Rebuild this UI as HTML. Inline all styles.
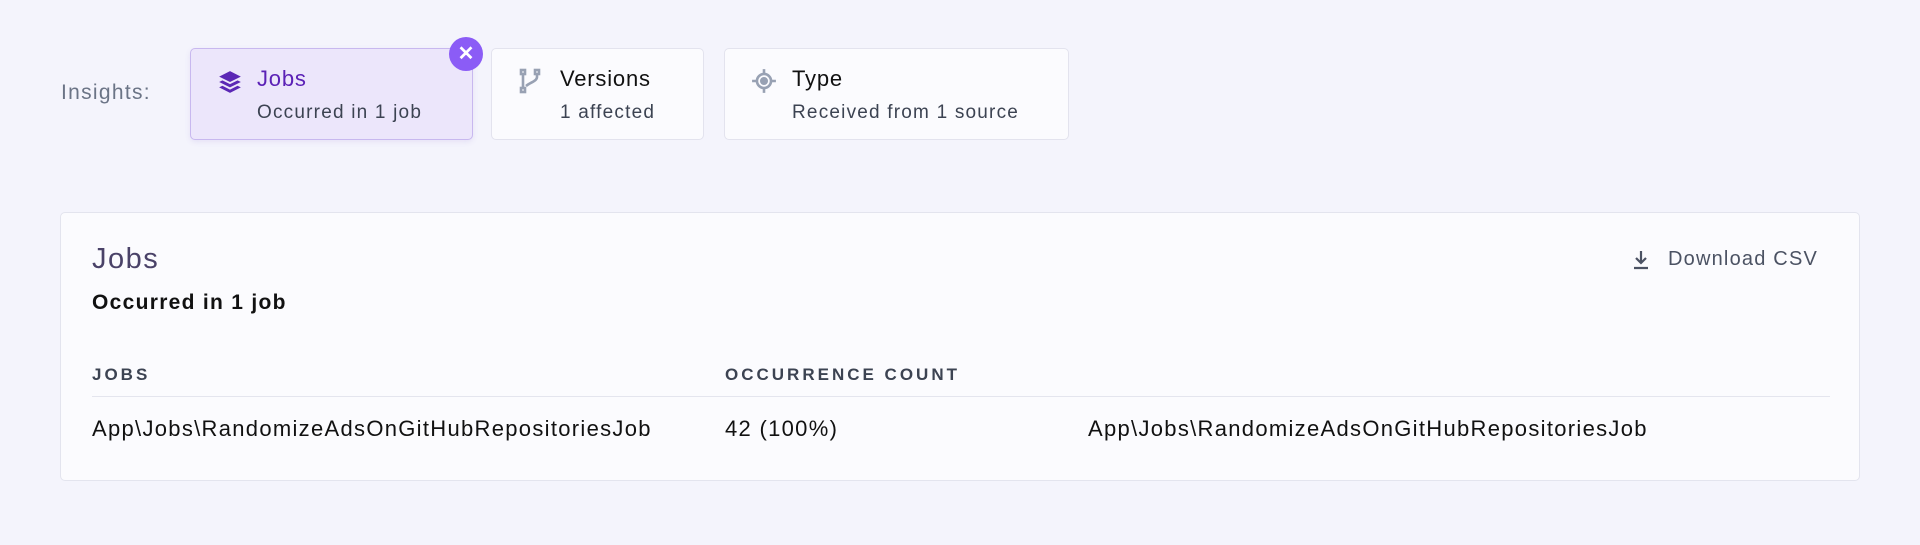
<!DOCTYPE html>
<html><head><meta charset="utf-8"><style>
*{box-sizing:border-box;margin:0;padding:0}
body{width:1920px;height:545px;background:#f4f4fc;font-family:"Liberation Sans",sans-serif;position:relative;overflow:hidden;color:#111}
.abs{position:absolute}
.card{position:absolute;top:48px;height:92px;background:#fbfbfe;border:1px solid #e3e3ee;border-radius:5px}
.card .t{position:absolute;top:17px;font-size:22px;color:#111;letter-spacing:.8px}
.card .s{position:absolute;top:53px;font-size:19px;color:#3c4352;letter-spacing:1.2px}
.panel{position:absolute;left:60px;top:212px;width:1800px;height:269px;background:#fbfbfe;border:1px solid #e3e4ee;border-radius:5px}
.row{font-size:22px;color:#111;letter-spacing:1.3px}
.hd{font-size:17px;color:#3c4352;letter-spacing:3px;font-weight:bold}
</style></head><body>
<div class="abs" style="left:61px;top:81px;font-size:21px;color:#6b7486;letter-spacing:1.3px">Insights:</div>

<div class="card" style="left:190px;width:283px;background:#ece6fb;border-color:#c8b8ef;box-shadow:0 2px 6px rgba(120,90,200,.12)">
  <svg class="abs" style="left:26px;top:20px" width="26" height="26" viewBox="0 0 24 24" fill="#5b27b5"><path d="M12 2 2 7l10 5 10-5z"/><path d="M2 12l3-1.5 7 3.5 7-3.5 3 1.5-10 5z"/><path d="M2 17l3-1.5 7 3.5 7-3.5 3 1.5-10 5z"/></svg>
  <div class="t" style="left:66px;color:#5b21b6">Jobs</div>
  <div class="s" style="left:66px">Occurred in 1 job</div>
</div>
<div class="abs" style="left:449px;top:37px;width:34px;height:34px;border-radius:50%;background:#8b5cf6;color:#fff;text-align:center;line-height:34px;font-size:20px;font-weight:bold">✕</div>

<div class="card" style="left:491px;width:213px">
  <svg class="abs" style="left:26px;top:18px" width="24" height="28" viewBox="0 0 24 28" fill="none" stroke="#98a1b3" stroke-width="2.6"><rect x="3" y="3" width="4" height="4"/><rect x="3" y="21" width="4" height="4"/><rect x="17" y="3" width="4" height="4"/><path d="M5 7v14M19 7v3c0 4-6 5-11 9"/></svg>
  <div class="t" style="left:68px">Versions</div>
  <div class="s" style="left:68px">1 affected</div>
</div>

<div class="card" style="left:724px;width:345px">
  <svg class="abs" style="left:26px;top:19px" width="26" height="26" viewBox="0 0 24 24" fill="none" stroke="#98a1b3" stroke-width="2.4"><circle cx="12" cy="12" r="6.5"/><circle cx="12" cy="12" r="2.5" fill="#98a1b3"/><path d="M12 1v4M12 19v4M1 12h4M19 12h4"/></svg>
  <div class="t" style="left:67px">Type</div>
  <div class="s" style="left:67px">Received from 1 source</div>
</div>

<div class="panel">
  <div class="abs" style="left:31px;top:30px;font-size:29px;color:#4a4268;letter-spacing:1.5px">Jobs</div>
  <svg class="abs" style="left:1570px;top:36px" width="20" height="22" viewBox="0 0 20 22" fill="none" stroke="#4b5263" stroke-width="2.2"><path d="M10 2v12M5 9l5 5 5-5M3 19h14"/></svg>
  <div class="abs" style="left:1607px;top:35px;font-size:20px;color:#4b5263;letter-spacing:1.2px">Download CSV</div>
  <div class="abs" style="left:31px;top:78px;font-size:21px;font-weight:bold;color:#111;letter-spacing:1.3px">Occurred in 1 job</div>
  <div class="abs hd" style="left:31px;top:152px">JOBS</div>
  <div class="abs hd" style="left:664px;top:152px">OCCURRENCE COUNT</div>
  <div class="abs" style="left:31px;top:183px;width:1738px;height:1px;background:#e4e5ee"></div>
  <div class="abs row" style="left:31px;top:203px">App\Jobs\RandomizeAdsOnGitHubRepositoriesJob</div>
  <div class="abs row" style="left:664px;top:203px">42 (100%)</div>
  <div class="abs row" style="left:1027px;top:203px">App\Jobs\RandomizeAdsOnGitHubRepositoriesJob</div>
</div>
</body></html>
